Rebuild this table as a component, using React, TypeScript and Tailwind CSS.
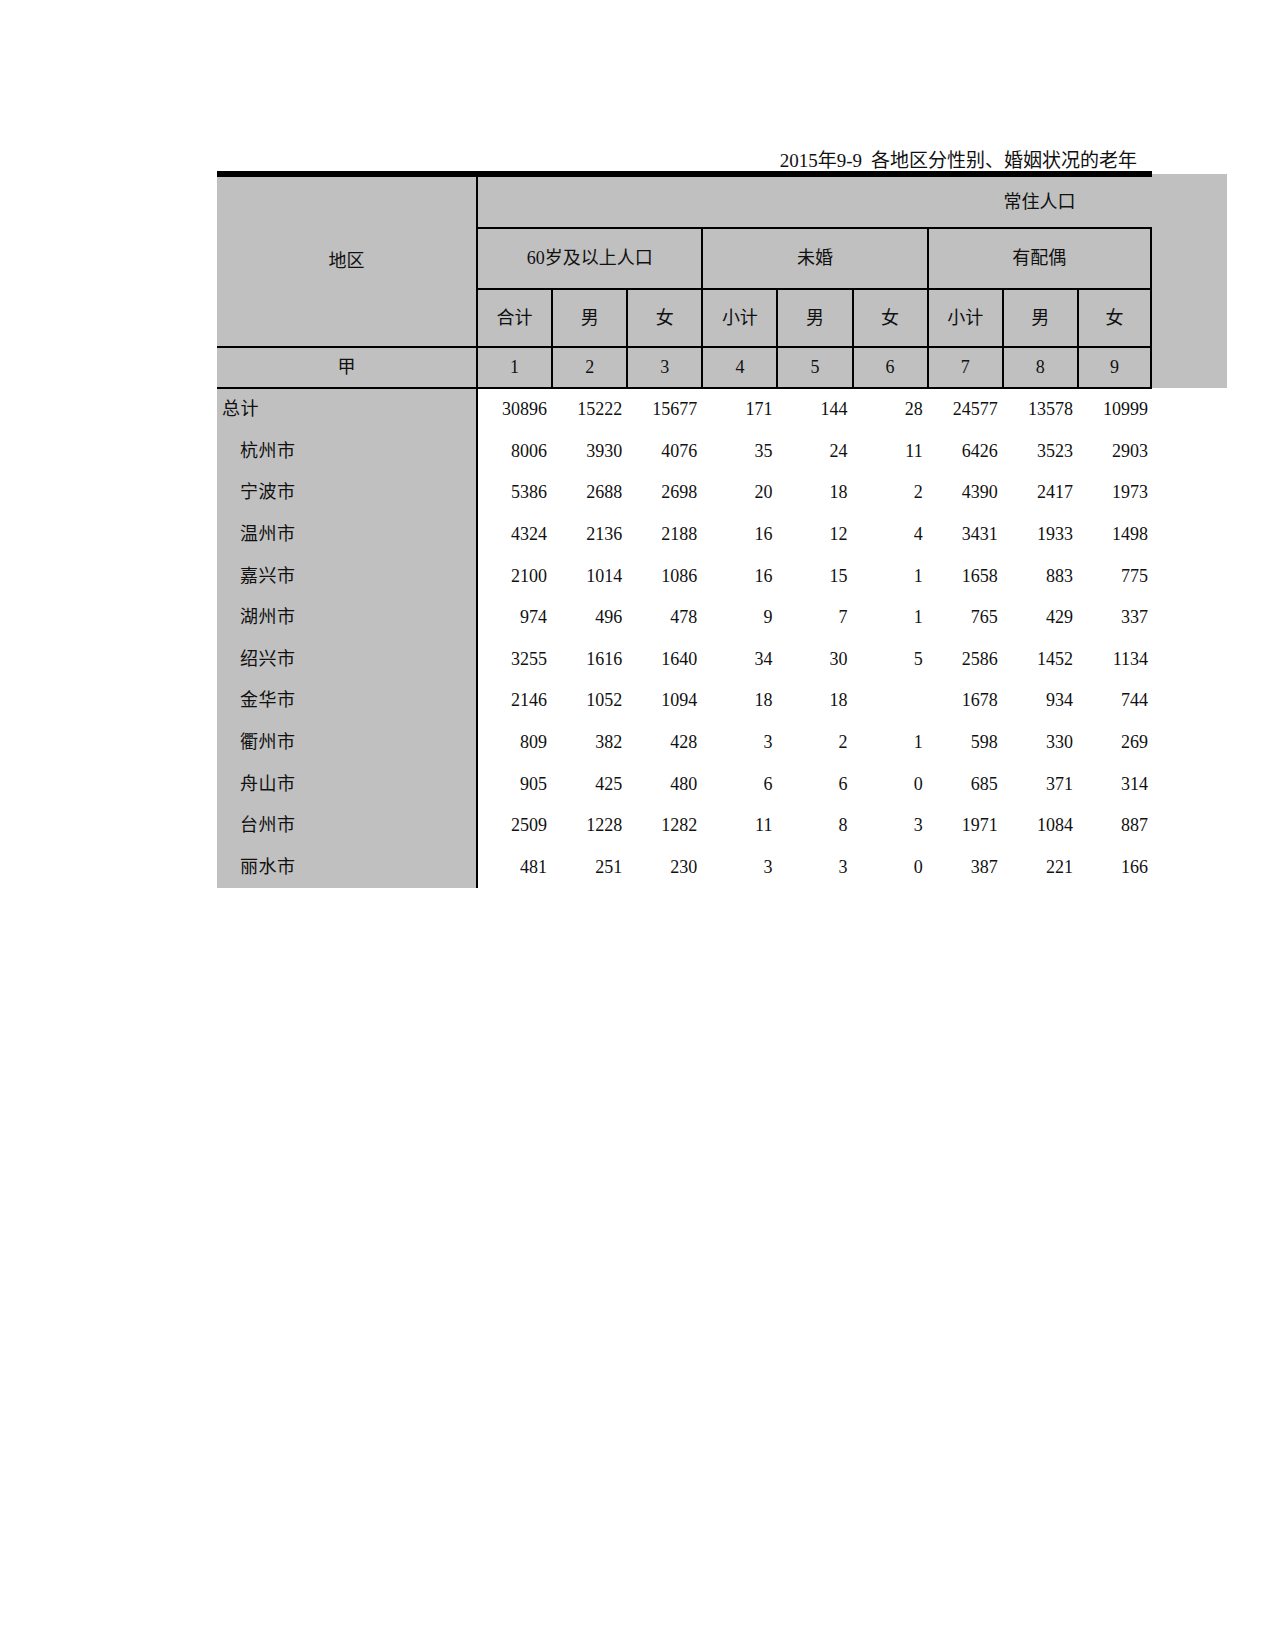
import React from "react";

const font = { fontFamily: '"Liberation Serif", "Noto Sans CJK SC", serif' };

const rows: [string, string[]][] = [
  ["总计", ["30896", "15222", "15677", "171", "144", "28", "24577", "13578", "10999"]],
  ["杭州市", ["8006", "3930", "4076", "35", "24", "11", "6426", "3523", "2903"]],
  ["宁波市", ["5386", "2688", "2698", "20", "18", "2", "4390", "2417", "1973"]],
  ["温州市", ["4324", "2136", "2188", "16", "12", "4", "3431", "1933", "1498"]],
  ["嘉兴市", ["2100", "1014", "1086", "16", "15", "1", "1658", "883", "775"]],
  ["湖州市", ["974", "496", "478", "9", "7", "1", "765", "429", "337"]],
  ["绍兴市", ["3255", "1616", "1640", "34", "30", "5", "2586", "1452", "1134"]],
  ["金华市", ["2146", "1052", "1094", "18", "18", "", "1678", "934", "744"]],
  ["衢州市", ["809", "382", "428", "3", "2", "1", "598", "330", "269"]],
  ["舟山市", ["905", "425", "480", "6", "6", "0", "685", "371", "314"]],
  ["台州市", ["2509", "1228", "1282", "11", "8", "3", "1971", "1084", "887"]],
  ["丽水市", ["481", "251", "230", "3", "3", "0", "387", "221", "166"]],
];

const subHeads = ["合计", "男", "女", "小计", "男", "女", "小计", "男", "女"];

const App = () => {
  return (
    <div className="min-h-[1650px] bg-white pt-[150px] pl-[217px] text-[18px] text-[#111]" style={font}>
      {/* title */}
      <div className="flex h-[21px] w-[935px] items-end justify-end pr-[15px] text-[19px] leading-[20px]">
        2015年9-9<span className="inline-block w-[9px]" />各地区分性别、婚姻状况的老年
      </div>

      <div className="flex">
        <div className="w-[935px]">
          <div className="h-[6px] bg-black" />

          {/* header */}
          <div className="grid grid-cols-[259px_repeat(9,1fr)] grid-rows-[52px_61px_58px_41px] bg-[#c0c0c0]">
            <div className="row-span-3 flex items-center justify-center border-b-2 border-black">地区</div>
            <div className="col-span-9 flex items-center justify-end border-b-2 border-l-2 border-black">
              <span className="w-[225px] text-center">常住人口</span>
            </div>

            <div className="col-span-3 flex items-center justify-center border-b-2 border-l-2 border-black">
              60岁及以上人口
            </div>
            <div className="col-span-3 flex items-center justify-center border-b-2 border-l-2 border-black">未婚</div>
            <div className="col-span-3 flex items-center justify-center border-b-2 border-l-2 border-r-2 border-black">
              有配偶
            </div>

            {subHeads.map((h, i) => (
              <div
                key={"s" + i}
                className={
                  "flex items-center justify-center border-b-2 border-l-2 border-black" +
                  (i === 8 ? " border-r-2" : "")
                }
              >
                {h}
              </div>
            ))}

            <div className="flex items-center justify-center border-b-2 border-black">甲</div>
            {subHeads.map((_, i) => (
              <div
                key={"n" + i}
                className={
                  "flex items-center justify-center border-b-2 border-l-2 border-black" +
                  (i === 8 ? " border-r-2" : "")
                }
              >
                {i + 1}
              </div>
            ))}
          </div>

          {/* body */}
          {rows.map(([name, vals], r) => (
            <div key={name} className="grid h-[41.6px] grid-cols-[259px_repeat(9,1fr)]">
              <div
                className={
                  "flex items-center bg-[#c0c0c0] tracking-[0.5px] " + (r === 0 ? "pl-[5px]" : "pl-[23px]")
                }
              >
                {name}
              </div>
              {vals.map((v, i) => (
                <div
                  key={i}
                  className={"flex items-center justify-end pr-[4px]" + (i === 0 ? " border-l-2 border-black" : "")}
                >
                  {v}
                </div>
              ))}
            </div>
          ))}
        </div>

        <div className="mt-[3px] h-[214px] w-[75px] bg-[#c0c0c0]" />
      </div>
    </div>
  );
};

export default App;
